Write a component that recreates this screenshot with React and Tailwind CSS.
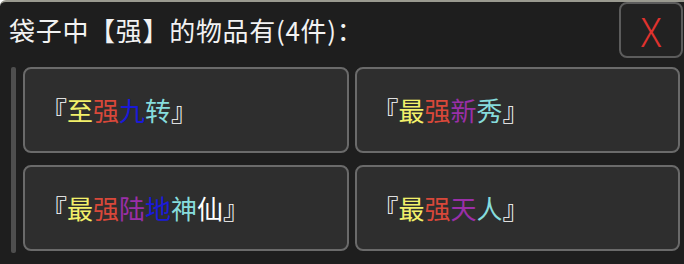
import React from "react";

const items = [
  [["『", "#ffffff"], ["至", "#f2f06a"], ["强", "#d9483a"], ["九", "#1a1ad8"], ["转", "#86dcdc"], ["』", "#ffffff"]],
  [["『", "#ffffff"], ["最", "#f2f06a"], ["强", "#d9483a"], ["新", "#9a2fa8"], ["秀", "#86dcdc"], ["』", "#ffffff"]],
  [["『", "#ffffff"], ["最", "#f2f06a"], ["强", "#d9483a"], ["陆", "#9a2fa8"], ["地", "#1a1ad8"], ["神", "#86dcdc"], ["仙", "#ffffff"], ["』", "#ffffff"]],
  [["『", "#ffffff"], ["最", "#f2f06a"], ["强", "#d9483a"], ["天", "#9a2fa8"], ["人", "#86dcdc"], ["』", "#ffffff"]],
];

const App = () => {
  return (
    <div
      className="w-[684px] h-[264px] overflow-hidden bg-[#1e1e1e] border-t-2 border-[#9a9a90] rounded-tl-[6px]"
      style={{ fontFamily: '"Noto Sans CJK SC", "Noto Sans", sans-serif' }}
    >
      {/* header */}
      <div className="flex items-start justify-between h-[64px]">
        <div className="pl-[9px] pt-[10px] text-[26px] leading-[36px] tracking-[0.7px] text-[#f2f2f2]">
          袋子中【强】的物品有(4件)：
        </div>
        <button className="mr-[1px] w-[64px] h-[56px] rounded-[8px] border-2 border-[#5c5c5c] bg-[#222222] flex items-center justify-center text-[40px] leading-none text-[#e0322e] font-light">
          X
        </button>
      </div>

      {/* list */}
      <div className="flex gap-[7px] pl-[11px] pt-[1px]">
        <div className="w-[5px] h-[186px] bg-[#4e4e4e] rounded-[2px]" />
        <div className="grid grid-cols-2 gap-x-[6px] gap-y-[10px] w-[657px]">
          {items.map((item, i) => (
            <div
              key={i}
              className="h-[86px] rounded-[8px] border-2 border-[#6a6a6a] bg-[#2e2e2e] flex items-center pl-[16px] text-[26px] leading-none"
            >
              {item.map(([ch, color], j) => (
                <span key={j} style={{ color }}>{ch}</span>
              ))}
            </div>
          ))}
        </div>
      </div>
    </div>
  );
};

export default App;
